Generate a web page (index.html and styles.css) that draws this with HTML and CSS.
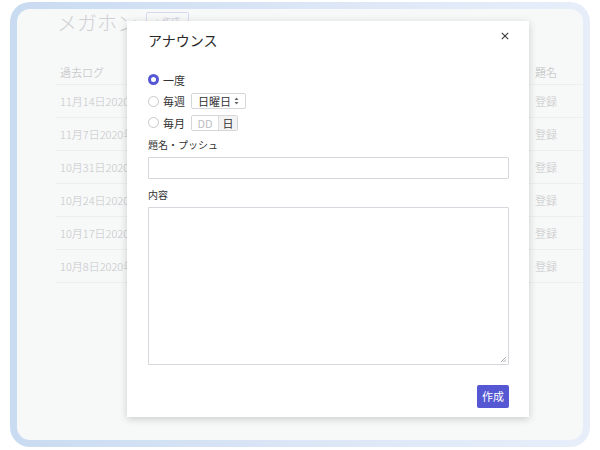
FILE: index.html
```html
<!DOCTYPE html>
<html lang="ja">
<head>
<meta charset="utf-8">
<link rel="stylesheet" href="styles.css">
</head>
<body>
<div class="frame">
  <div class="panel">
    <div class="page-head">
      <h1 class="page-title">メガホン</h1>
      <span class="ghost-btn">+ 作成</span>
    </div>
    <div class="table">
      <div class="row head"><span>過去ログ</span><span>題名</span></div>
      <div class="row"><span>11月14日2020年</span><span>登録</span></div>
      <div class="row"><span>11月7日2020年</span><span>登録</span></div>
      <div class="row"><span>10月31日2020年</span><span>登録</span></div>
      <div class="row"><span>10月24日2020年</span><span>登録</span></div>
      <div class="row"><span>10月17日2020年</span><span>登録</span></div>
      <div class="row"><span>10月8日2020年</span><span>登録</span></div>
    </div>
  </div>
</div>

<div class="modal">
  <div class="modal-head">
    <span class="modal-title">アナウンス</span>
    <svg class="close" width="8" height="8" viewBox="0 0 8 8"><path d="M0.8 0.8L7.2 7.2M7.2 0.8L0.8 7.2" stroke="#3a3a3a" stroke-width="1.1" fill="none"/></svg>
  </div>
  <div class="radios">
    <div class="radio-row"><span class="radio checked"></span><span class="rlabel">一度</span></div>
    <div class="radio-row"><span class="radio"></span><span class="rlabel">毎週</span>
      <span class="select">日曜日<svg class="arrows" width="5" height="8" viewBox="0 0 5 8"><path d="M2.5 0.5L4.5 3H0.5Z M2.5 7.5L4.5 5H0.5Z" fill="#666"/></svg></span></div>
    <div class="radio-row"><span class="radio"></span><span class="rlabel">毎月</span>
      <span class="igroup"><span class="dd">DD</span><span class="addon">日</span></span></div>
  </div>
  <div class="flabel first">題名・プッシュ</div>
  <div class="input"></div>
  <div class="flabel">内容</div>
  <div class="textarea"><svg class="grip" width="7" height="7" viewBox="0 0 7 7"><path d="M6 1L1 6M6 3.5L3.5 6M6 5.5L5.5 6" stroke="#999" stroke-width="0.8"/></svg></div>
  <div class="foot"><span class="btn">作成</span></div>
</div>
</body>
</html>
```
FILE: styles.css
```css
* { box-sizing: border-box; }
html, body { margin: 0; padding: 0; }
body {
  width: 600px;
  height: 450px;
  background: #ffffff;
  font-family: "Noto Sans CJK JP", "Noto Sans", "Liberation Sans", sans-serif;
  position: relative;
  overflow: hidden;
}
.frame {
  margin: 2px 10px 0 10px;
  width: 580px;
  height: 445px;
  padding: 7px;
  border-radius: 20px;
  background: linear-gradient(90deg, #c9dbf1 0%, #dbe6f6 50%, #e7eefa 100%);
}
.panel {
  width: 100%;
  height: 100%;
  border-radius: 13px;
  background: #f7f8f8;
  padding: 0 0 0 39px;
  overflow: hidden;
}
.page-head {
  display: flex;
  align-items: flex-start;
  height: 50px;
}
.page-title {
  margin: 0 0 0 1px;
  font-size: 20px;
  font-weight: 300;
  line-height: 28px;
  color: #cfd0d3;
}
.ghost-btn {
  margin: 3px 0 0 9px;
  width: 43px;
  height: 20px;
  border: 1px solid #d8d8ee;
  border-radius: 2px;
  font-size: 9px;
  line-height: 18px;
  color: #d4d4e4;
  text-align: center;
}
.table { display: flex; flex-direction: column; }
.row {
  display: grid;
  grid-template-columns: 1fr 48px;
  height: 33px;
  align-items: center;
  border-bottom: 1px solid #eeeeef;
  padding-left: 4px;
  font-size: 11px;
  font-weight: 300;
  color: #c6c7c9;
}
.row.head { height: 26px; color: #b9babc; }

.modal {
  position: absolute;
  left: 127px;
  top: 21px;
  width: 402px;
  height: 396px;
  background: #ffffff;
  box-shadow: 0 2px 8px rgba(0,0,0,0.18);
  padding: 0 20px 0 21px;
  color: #333;
}
.modal-head {
  position: relative;
  padding-top: 11px;
  height: 48px;
}
.modal-title {
  font-size: 14px;
  line-height: 16px;
  display: block;
  color: #2a2a2a;
}
.close { position: absolute; right: 0px; top: 11px; }
.radios { display: flex; flex-direction: column; }
.radio-row {
  display: flex;
  align-items: center;
  height: 21.5px;
  font-size: 11px;
  color: #333;
}
.radio {
  width: 11px;
  height: 11px;
  border-radius: 50%;
  border: 1px solid #c8c8cc;
  background: #fff;
  margin-right: 4px;
}
.radio.checked {
  border: 3px solid #5557d3;
  background: #fff;
}
.rlabel { width: 28px; }
.select {
  display: flex;
  align-items: center;
  justify-content: space-between;
  width: 55px;
  height: 16px;
  border: 1px solid #d6d6da;
  border-radius: 2px;
  padding: 0 6px 0 6px;
  font-size: 11px;
  color: #333;
}
.igroup {
  display: flex;
  height: 16px;
  border: 1px solid #d6d6da;
  border-radius: 2px;
  font-size: 11px;
  line-height: 14px;
}
.dd { width: 26px; text-align: center; color: #bdbdc2; }
.addon {
  width: 19px;
  text-align: center;
  background: #f3f3f4;
  border-left: 1px solid #dcdce0;
  color: #333;
}
.flabel {
  font-size: 10px;
  line-height: 14px;
  margin-top: 9px;
  margin-bottom: 5px;
  color: #333;
}
.flabel.first { margin-top: 4.5px; }
.input {
  height: 22px;
  border: 1px solid #d6d6dc;
  border-radius: 1px;
}
.textarea {
  position: relative;
  height: 158px;
  border: 1px solid #d6d6dc;
  border-radius: 1px;
}
.grip { position: absolute; right: 1px; bottom: 1px; }
.foot {
  display: flex;
  justify-content: flex-end;
  margin-top: 20px;
}
.btn {
  width: 32px;
  height: 23px;
  background: #5557d3;
  color: #fff;
  border-radius: 2px;
  font-size: 11px;
  line-height: 23px;
  text-align: center;
}
```
